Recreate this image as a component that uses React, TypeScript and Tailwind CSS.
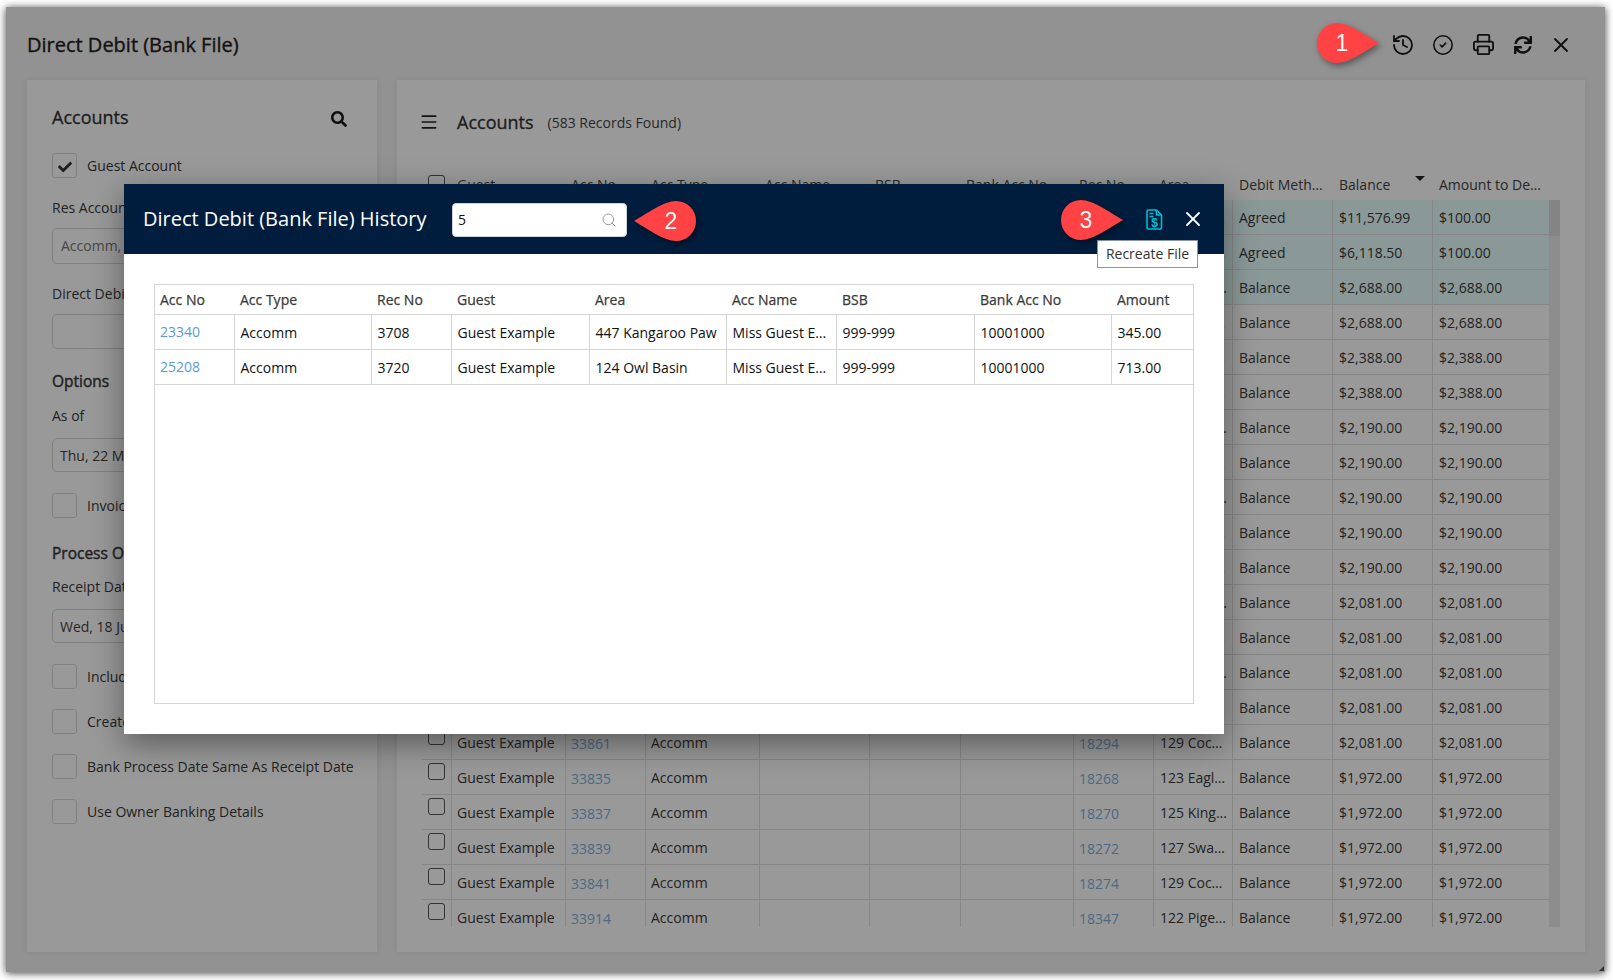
import React from "react";
import { History, CircleCheck, Printer, X, Menu, Search } from "lucide-react";
import { FaSync, FaSearch, FaCheck } from "react-icons/fa";

type Row = { acc: string; rec: string; area: string; method: string; balance: string; amount: string; teal?: boolean };

const rows: Row[] = [
  { acc: "33201", rec: "17634", area: "101 Swan Rd East", method: "Agreed", balance: "$11,576.99", amount: "$100.00", teal: true },
  { acc: "33202", rec: "17635", area: "102 Swan Rd East", method: "Agreed", balance: "$6,118.50", amount: "$100.00", teal: true },
  { acc: "33340", rec: "17773", area: "103 Kingfisher", method: "Balance", balance: "$2,688.00", amount: "$2,688.00", teal: true },
  { acc: "33341", rec: "17774", area: "104 Swan Rd East", method: "Balance", balance: "$2,688.00", amount: "$2,688.00" },
  { acc: "33342", rec: "17775", area: "105 Swan Rd East", method: "Balance", balance: "$2,388.00", amount: "$2,388.00" },
  { acc: "33343", rec: "17776", area: "106 Swan Rd East", method: "Balance", balance: "$2,388.00", amount: "$2,388.00" },
  { acc: "33344", rec: "17777", area: "107 Kingfisher", method: "Balance", balance: "$2,190.00", amount: "$2,190.00" },
  { acc: "33345", rec: "17778", area: "108 Swan Rd East", method: "Balance", balance: "$2,190.00", amount: "$2,190.00" },
  { acc: "33346", rec: "17779", area: "109 Kingfisher", method: "Balance", balance: "$2,190.00", amount: "$2,190.00" },
  { acc: "33347", rec: "17780", area: "110 Swan Rd East", method: "Balance", balance: "$2,190.00", amount: "$2,190.00" },
  { acc: "33348", rec: "17781", area: "111 Swan Rd East", method: "Balance", balance: "$2,190.00", amount: "$2,190.00" },
  { acc: "33349", rec: "17782", area: "112 Kingfisher", method: "Balance", balance: "$2,081.00", amount: "$2,081.00" },
  { acc: "33350", rec: "17783", area: "113 Swan Rd East", method: "Balance", balance: "$2,081.00", amount: "$2,081.00" },
  { acc: "33351", rec: "17784", area: "114 Kingfisher", method: "Balance", balance: "$2,081.00", amount: "$2,081.00" },
  { acc: "33352", rec: "17785", area: "115 Swan Rd East", method: "Balance", balance: "$2,081.00", amount: "$2,081.00" },
  { acc: "33861", rec: "18294", area: "129 Cockatoo", method: "Balance", balance: "$2,081.00", amount: "$2,081.00" },
  { acc: "33835", rec: "18268", area: "123 Eagle Way", method: "Balance", balance: "$1,972.00", amount: "$1,972.00" },
  { acc: "33837", rec: "18270", area: "125 Kingfisher", method: "Balance", balance: "$1,972.00", amount: "$1,972.00" },
  { acc: "33839", rec: "18272", area: "127 Swan Rd East", method: "Balance", balance: "$1,972.00", amount: "$1,972.00" },
  { acc: "33841", rec: "18274", area: "129 Cockatoo", method: "Balance", balance: "$1,972.00", amount: "$1,972.00" },
  { acc: "33914", rec: "18347", area: "122 Pigeon Ct", method: "Balance", balance: "$1,972.00", amount: "$1,972.00" },
];

function Box({ checked }: { checked?: boolean }) {
  return (
    <div className="flex h-[25px] w-[25px] shrink-0 items-center justify-center rounded-[3px] border border-[#d8d8d8] text-[#333]">
      {checked ? <FaCheck size={14} className="mt-[2px]" /> : null}
    </div>
  );
}

function CheckRow({ label, checked, className }: { label: string; checked?: boolean; className?: string }) {
  return (
    <div className={"flex h-[25px] items-center gap-[10px] " + (className ?? "")}>
      <Box checked={checked} />
      <span className="whitespace-nowrap text-[14px] text-[#3a3a3a]">{label}</span>
    </div>
  );
}

function Field({ text, className }: { text?: string; className?: string }) {
  return (
    <div className={"flex items-center rounded-[5px] border border-[#d8d8d8] pl-[7px] text-[14px] " + (className ?? "")}>
      {text}
    </div>
  );
}

function LeftPanel() {
  return (
    <aside className="w-[350px] shrink-0 bg-white px-[25px] pt-[25px] shadow-[0_0_6px_rgba(0,0,0,0.08)]">
      <div className="flex h-[24px] items-center justify-between pr-[5px]">
        <h2 className="text-[18px] font-medium text-[#333] [-webkit-text-stroke:0.3px_#333]">Accounts</h2>
        <FaSearch size={16} className="mt-[4px] text-[#1a1a1a]" />
      </div>
      <CheckRow label="Guest Account" checked className="mt-[24px]" />
      <div className="mt-[20px] h-[20px] text-[14px] leading-[20px] text-[#3a3a3a]">Res Account Type</div>
      <Field text="Accomm, Owner" className="mt-[10px] h-[36px] pb-[2px] pl-[8px] text-[#777]" />
      <div className="mt-[20px] h-[20px] text-[14px] leading-[20px] text-[#3a3a3a]">Direct Debit Method</div>
      <Field className="mt-[10px] h-[35px]" />
      <h3 className="mt-[20px] h-[24px] text-[15.5px] font-medium leading-[24px] text-[#3a3a3a] [-webkit-text-stroke:0.45px_#3a3a3a]">Options</h3>
      <div className="mt-[13px] h-[20px] text-[14px] leading-[20px] text-[#3a3a3a]">As of</div>
      <Field text="Thu, 22 May 2025" className="mt-[12px] h-[34px] text-[#444]" />
      <CheckRow label="Invoices Only" className="mt-[21px]" />
      <h3 className="mt-[23px] h-[24px] text-[15.5px] font-medium leading-[24px] text-[#3a3a3a] [-webkit-text-stroke:0.45px_#3a3a3a]">Process Options</h3>
      <div className="mt-[12px] h-[20px] text-[14px] leading-[20px] text-[#3a3a3a]">Receipt Date</div>
      <Field text="Wed, 18 Jun 2025" className="mt-[12px] h-[34px] text-[#444]" />
      <CheckRow label="Include Fees" className="mt-[21px]" />
      <CheckRow label="Create Receipts" className="mt-[20px]" />
      <CheckRow label="Bank Process Date Same As Receipt Date" className="mt-[20px]" />
      <CheckRow label="Use Owner Banking Details" className="mt-[20px]" />
    </aside>
  );
}

function HeaderCell({ label, className, children }: { label: string; className: string; children?: React.ReactNode }) {
  return (
    <div className={"relative truncate px-[6px] text-[14px] font-medium text-[#444] " + className}>
      {label}
      {children}
    </div>
  );
}

function TableRow({ row }: { row: Row }) {
  const cell = "h-full shrink-0 truncate border-r border-[#e0e0e0] pl-[5px] pr-[6px] leading-[35px]";
  const last = "h-full shrink-0 truncate border-r border-[#e0e0e0] px-[6px] leading-[35px]";
  return (
    <div className={"flex h-[35px] border-b border-[#e0e0e0] text-[14px] text-[#3a3a3a] " + (row.teal ? "bg-[#e6fdfd]" : "")}>
      <div className="flex h-full w-[30px] shrink-0 justify-center border-r border-[#e0e0e0] pr-[1px] pt-[3px]">
        <div className="h-[17px] w-[17px] rounded-[3px] border border-[#555] bg-white" />
      </div>
      <div className={cell + " w-[114px]"}>Guest Example</div>
      <div className={cell + " w-[80px] pt-[1px] text-[#7fb0dc]"}>{row.acc}</div>
      <div className={cell + " w-[114px]"}>Accomm</div>
      <div className={cell + " w-[110px]"} />
      <div className={cell + " w-[91px]"} />
      <div className={cell + " w-[113px]"} />
      <div className={cell + " w-[80px] pt-[1px] text-[#7fb0dc]"}>{row.rec}</div>
      <div className="h-full w-[79px] shrink-0 truncate border-r border-[#e0e0e0] pl-[6px] pr-[4px] leading-[35px]">{row.area}</div>
      <div className={last + " w-[100px]"}>{row.method}</div>
      <div className={last + " w-[100px]"}>{row.balance}</div>
      <div className={last + " w-[115px] border-r-0"}>{row.amount}</div>
    </div>
  );
}

function RightPanel() {
  return (
    <section className="min-w-0 flex-1 bg-white pl-[25px] pr-[25px] pt-[30px] shadow-[0_0_6px_rgba(0,0,0,0.08)]">
      <div className="flex h-[24px] items-center">
        <Menu size={20} strokeWidth={2} className="ml-[-3px] text-[#222]" />
        <h2 className="ml-[18px] text-[18px] font-medium text-[#333] [-webkit-text-stroke:0.3px_#333]">Accounts</h2>
        <span className="ml-[14px] text-[14px] text-[#444]">(583 Records Found)</span>
      </div>
      <div className="mt-[36px] flex h-[30px] items-center pb-[2px] pr-[12px]">
        <div className="flex w-[29px] shrink-0 justify-center">
          <div className="mb-[2px] h-[17px] w-[17px] rounded-[3px] border border-[#555]" />
        </div>
        <HeaderCell label="Guest" className="w-[114px]" />
        <HeaderCell label="Acc No" className="w-[80px]" />
        <HeaderCell label="Acc Type" className="w-[114px]" />
        <HeaderCell label="Acc Name" className="w-[110px]" />
        <HeaderCell label="BSB" className="w-[91px]" />
        <HeaderCell label="Bank Acc No" className="w-[113px]" />
        <HeaderCell label="Rec No" className="w-[80px]" />
        <HeaderCell label="Area" className="w-[80px]" />
        <HeaderCell label="Debit Method" className="w-[100px]" />
        <HeaderCell label="Balance" className="w-[100px]">
          <span className="absolute right-[8px] top-[2px] h-0 w-0 border-x-[5px] border-t-[5px] border-x-transparent border-t-[#222]" />
        </HeaderCell>
        <HeaderCell label="Amount to Debit" className="w-[115px]" />
      </div>
      <div className="flex h-[727px] overflow-hidden">
        <div className="w-[1127px] shrink-0">
          {rows.map((r) => (
            <TableRow key={r.acc} row={r} />
          ))}
        </div>
        <div className="w-[12px] shrink-0 bg-[#ececec]">
          <div className="h-[36px] bg-[#dcdcdc]" />
        </div>
      </div>
    </section>
  );
}

function FileDollar() {
  return (
    <svg width="17" height="21" viewBox="0 0 17 21" fill="none" stroke="#00bcd4" strokeWidth="1.6">
      <path d="M2.5 1h8l5 5v12.5a1.5 1.5 0 0 1-1.5 1.5H2.5A1.5 1.5 0 0 1 1 18.5V2.5A1.5 1.5 0 0 1 2.5 1z" strokeLinejoin="round" />
      <path d="M10.5 1v5h5M3.5 4.5h4M3.5 7.5h4" />
      <text x="8.5" y="17.5" textAnchor="middle" fontSize="12" fontWeight="700" fontFamily="'Liberation Sans', sans-serif" fill="#00bcd4" stroke="none">$</text>
    </svg>
  );
}

const thCls = "border-b border-[#d4d4d4] px-[6px] text-left text-[14px] font-medium text-[#3a3a3a] [-webkit-text-stroke:0.25px_#3a3a3a]";
const tdBase = "truncate border-b border-[#d4d4d4] px-[6px] text-[14px]";
const tdCls = tdBase + " border-r pt-[1px] text-[#111]";
const tdLast = tdBase + " pt-[1px] text-[#111]";

function HistoryRow({ acc, rec, area, amount }: { acc: string; rec: string; area: string; amount: string }) {
  return (
    <tr className="h-[35px]">
      <td className={tdBase + " border-r pb-[1px] pl-[5px] text-[#5b9bd5]"}>{acc}</td>
      <td className={tdCls}>Accomm</td>
      <td className={tdCls}>{rec}</td>
      <td className={tdCls}>Guest Example</td>
      <td className={tdCls}>{area}</td>
      <td className={tdCls}>Miss Guest Example</td>
      <td className={tdCls}>999-999</td>
      <td className={tdCls}>10001000</td>
      <td className={tdLast}>{amount}</td>
    </tr>
  );
}

function Modal() {
  return (
    <div className="absolute left-[118px] top-[177px] h-[550px] w-[1100px] bg-white shadow-[0_10px_30px_rgba(0,0,0,0.4)]">
      <header className="flex h-[70px] items-center bg-[#001d3d] pl-[19px] pr-[19px]">
        <h2 className="w-[309px] shrink-0 text-[20px] text-white">Direct Debit (Bank File) History</h2>
        <div className="mt-[1px] flex h-[34px] w-[175px] items-center justify-between rounded-[4px] border border-[#cfd4da] bg-white pl-[5px] pr-[9px] text-[14px] text-[#111]">
          <span>5</span>
          <Search size={16} strokeWidth={1.5} className="text-[#999]" />
        </div>
        <div className="relative ml-auto flex items-center gap-[18px]">
          <FileDollar />
          <X size={24} strokeWidth={1.8} className="text-white" />
          <div className="absolute left-[-49px] top-[33px] flex h-[28px] w-[101px] items-center justify-center border border-[#8b98a3] bg-white pb-[2px] text-[14px] text-[#333]">
            Recreate File
          </div>
        </div>
      </header>
      <div className="ml-[30px] mt-[30px] h-[420px] w-[1040px] border border-[#d4d4d4]">
        <table className="w-full table-fixed border-collapse">
          <colgroup>
            <col className="w-[79px]" />
            <col className="w-[137px]" />
            <col className="w-[80px]" />
            <col className="w-[138px]" />
            <col className="w-[137px]" />
            <col className="w-[110px]" />
            <col className="w-[138px]" />
            <col className="w-[137px]" />
            <col />
          </colgroup>
          <thead>
            <tr className="h-[29px]">
              {["Acc No", "Acc Type", "Rec No", "Guest", "Area", "Acc Name", "BSB", "Bank Acc No", "Amount"].map((h, i) => (
                <th key={h} className={thCls + (i === 0 ? " pl-[5px]" : "")}>{h}</th>
              ))}
            </tr>
          </thead>
          <tbody>
            <HistoryRow acc="23340" rec="3708" area="447 Kangaroo Paw" amount="345.00" />
            <HistoryRow acc="25208" rec="3720" area="124 Owl Basin" amount="713.00" />
          </tbody>
        </table>
      </div>
    </div>
  );
}

function Callout({ n, flip, className }: { n: string; flip?: boolean; className: string }) {
  return (
    <div className={"absolute h-[40px] w-[62px] drop-shadow-[2px_3px_3px_rgba(0,0,0,0.4)] " + className}>
      <svg width="62" height="40" viewBox="0 0 62 40">
        <path
          d={flip ? "M42 0C30 0 14 12 0 20C14 28 30 40 42 40A20 20 0 0 0 42 0Z" : "M20 0C32 0 48 12 62 20C48 28 32 40 20 40A20 20 0 0 1 20 0Z"}
          fill="#ff4344"
        />
        <text x={flip ? 37 : 25} y="28" textAnchor="middle" fontSize="23" fill="#fff" fontFamily="'Liberation Sans', Arial, sans-serif">{n}</text>
      </svg>
    </div>
  );
}

export default function App() {
  return (
    <div className="relative h-[980px] w-[1613px] overflow-hidden bg-white pl-[6px] pt-[7px] font-['Open_Sans',sans-serif]">
      <div className="relative flex h-[965px] w-[1599px] flex-col bg-[#f3f3f3] shadow-[0_1px_8px_rgba(0,0,0,0.75)]">
        <div className="flex h-[73px] shrink-0 items-center pl-[21px] pr-[32px] pt-[2px] text-[#1a1a1a]">
          <h1 className="text-[20px] font-medium text-[#222] [-webkit-text-stroke:0.35px_#222]">Direct Debit (Bank File)</h1>
          <div className="ml-auto flex items-center">
            <History size={24} strokeWidth={1.8} className="mr-[17px]" />
            <CircleCheck size={22} strokeWidth={1.7} className="mr-[18px]" />
            <Printer size={23} strokeWidth={1.9} className="mr-[19px]" />
            <FaSync size={18} className="mr-[17px]" />
            <X size={24} strokeWidth={1.8} />
          </div>
        </div>
        <div className="flex min-h-0 flex-1 gap-[20px] pb-[20px] pl-[21px] pr-[20px]">
          <LeftPanel />
          <RightPanel />
        </div>
        <div className="absolute inset-0 bg-black/40" />
        <Modal />
        <div className="absolute bottom-[1px] right-[1px] h-0 w-0 border-b-[5px] border-l-[5px] border-b-[#333] border-l-transparent" />
      </div>
      <Callout n="1" className="left-[1317px] top-[23px]" />
      <Callout n="2" flip className="left-[634px] top-[201px]" />
      <Callout n="3" className="left-[1061px] top-[200px]" />
    </div>
  );
}
